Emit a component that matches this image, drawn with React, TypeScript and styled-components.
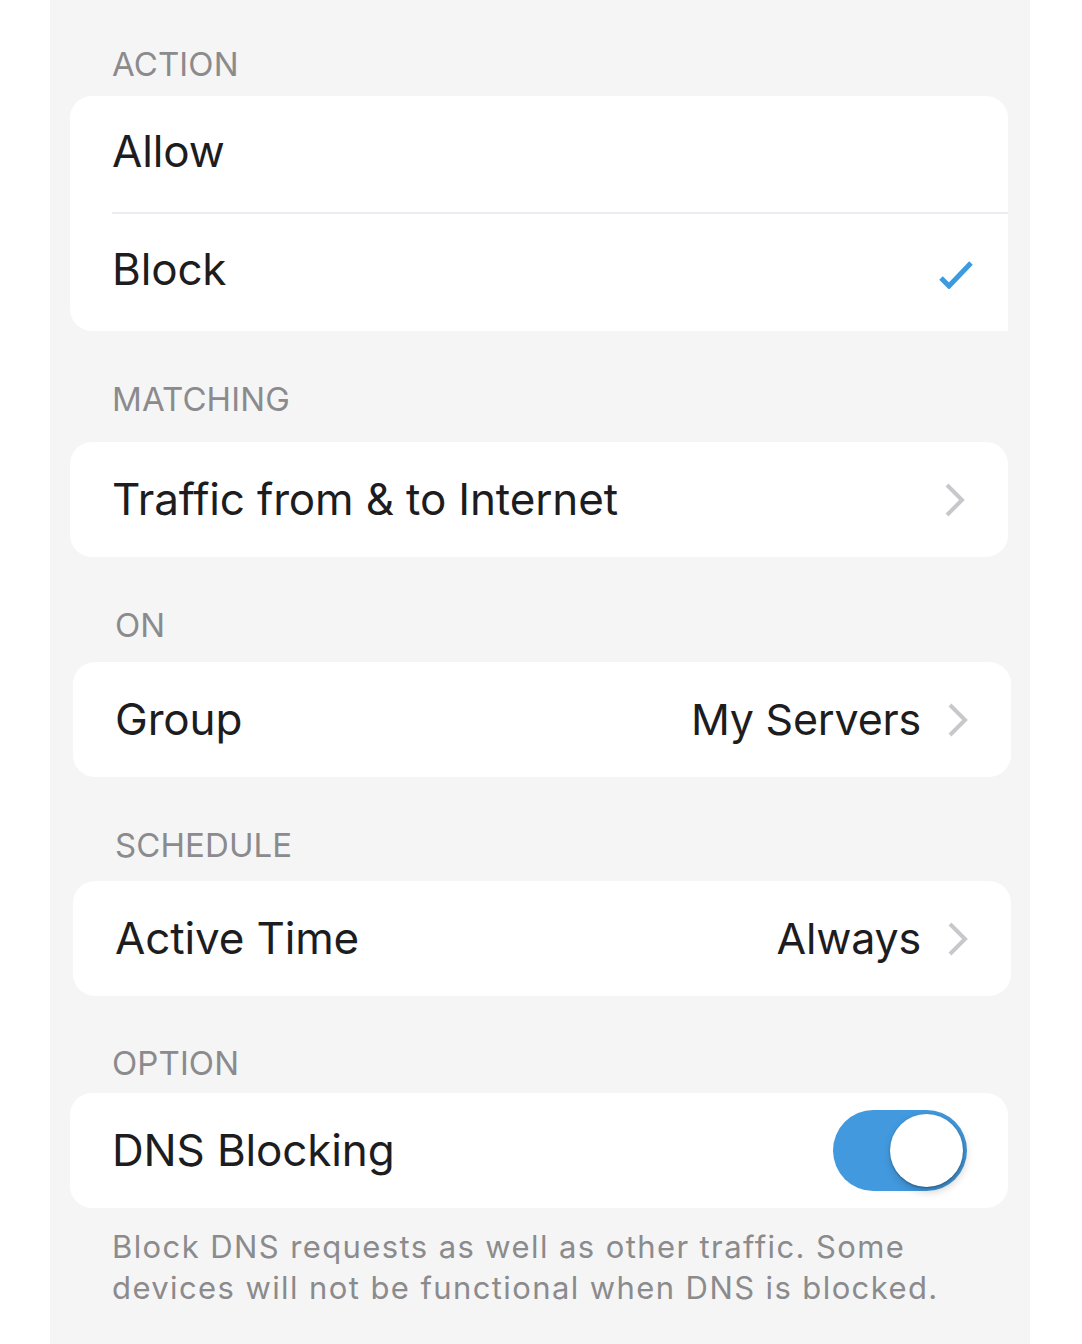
import React from "react";
import styled, { createGlobalStyle } from "styled-components";

const GlobalStyle = createGlobalStyle`
  html, body {
    margin: 0;
    padding: 0;
    background: #ffffff;
  }
  body {
    font-family: Inter, "Noto Sans", "Liberation Sans", sans-serif;
    -webkit-font-smoothing: antialiased;
  }
  * { box-sizing: border-box; }
`;

const Page = styled.main`
  margin-left: 50px;
  width: 980px;
  min-height: 1344px;
  background: #f5f5f5;
  padding: 0 22px 40px 20px;
  display: flex;
  flex-direction: column;
`;

const Section = styled.section<{ $shift?: number }>`
  display: flex;
  flex-direction: column;
  margin-left: ${(p) => p.$shift ?? 0}px;
  margin-right: ${(p) => -(p.$shift ?? 0)}px;
`;

const SectionTitle = styled.h2<{ $top: number; $bottom: number }>`
  margin: ${(p) => p.$top}px 0 ${(p) => p.$bottom}px 0;
  padding-left: 42px;
  font-size: 33px;
  line-height: 40px;
  font-weight: 400;
  color: #8b8b8e;
  letter-spacing: 0.1px;
  text-transform: uppercase;
`;

const Card = styled.div<{ $squareCorner?: boolean }>`
  background: #ffffff;
  border-radius: ${(p) => (p.$squareCorner ? "22px 22px 0 22px" : "22px")};
  display: flex;
  flex-direction: column;
  overflow: hidden;
`;

const Row = styled.div<{ $height?: number; $lift?: number }>`
  height: ${(p) => p.$height ?? 115}px;
  display: flex;
  align-items: center;
  padding: 0 36px ${(p) => p.$lift ?? 0}px 42px;
  gap: 27px;
`;

const Label = styled.span`
  flex: 1;
  font-size: 44px;
  line-height: 1.2;
  color: #1d1d1f;
  letter-spacing: -0.15px;
`;

const Value = styled.span`
  font-size: 43px;
  line-height: 1.2;
  color: #1d1d1f;
  letter-spacing: -0.2px;
`;

const Divider = styled.div`
  height: 2px;
  margin-left: 42px;
  background: #e9edf1;
`;

const ChevronIcon = styled.svg`
  width: 20px;
  height: 34px;
  margin-right: 7px;
  flex: none;
`;

const CheckIcon = styled.svg`
  width: 36px;
  height: 30px;
  margin-top: 8px;
  margin-right: -2px;
  flex: none;
`;

const Toggle = styled.div<{ $on: boolean }>`
  width: 134px;
  height: 81px;
  border-radius: 41px;
  background: ${(p) => (p.$on ? "#4299dd" : "#e5e5ea")};
  padding: 4px;
  display: flex;
  justify-content: ${(p) => (p.$on ? "flex-end" : "flex-start")};
  margin-right: 5px;
  flex: none;
`;

const Knob = styled.div`
  width: 73px;
  height: 73px;
  border-radius: 50%;
  background: #ffffff;
  box-shadow: 2px 4px 10px rgba(0, 0, 0, 0.22), 0 1px 2px rgba(0, 0, 0, 0.3);
`;

const Footnote = styled.p`
  margin: 18px 0 0 0;
  padding: 0 36px 0 42px;
  font-size: 31px;
  line-height: 41px;
  color: #8b8b8d;
  letter-spacing: 1.4px;
`;

const Chevron = () => (
  <ChevronIcon viewBox="0 0 20 34" aria-hidden>
    <polyline
      points="2,2 17,17 2,32"
      fill="none"
      stroke="#c7c7cc"
      strokeWidth={4}
      strokeLinejoin="miter"
    />
  </ChevronIcon>
);

const Check = () => (
  <CheckIcon viewBox="0 0 36 30" aria-hidden>
    <polyline
      points="3,19 11,27 33,4"
      fill="none"
      stroke="#3c9ae0"
      strokeWidth={5}
      strokeLinejoin="miter"
    />
  </CheckIcon>
);

export default function App() {
  return (
    <>
      <GlobalStyle />
      <Page>
        <Section>
          <SectionTitle $top={44} $bottom={12}>Action</SectionTitle>
          <Card $squareCorner>
            <Row $height={116} $lift={6}>
              <Label>Allow</Label>
            </Row>
            <Divider />
            <Row $height={117} $lift={6}>
              <Label>Block</Label>
              <Check />
            </Row>
          </Card>
        </Section>

        <Section>
          <SectionTitle $top={48} $bottom={23}>Matching</SectionTitle>
          <Card>
            <Row>
              <Label>Traffic from &amp; to Internet</Label>
              <Chevron />
            </Row>
          </Card>
        </Section>

        <Section $shift={3}>
          <SectionTitle $top={48} $bottom={17}>On</SectionTitle>
          <Card>
            <Row>
              <Label>Group</Label>
              <Value>My Servers</Value>
              <Chevron />
            </Row>
          </Card>
        </Section>

        <Section $shift={3}>
          <SectionTitle $top={48} $bottom={16}>Schedule</SectionTitle>
          <Card>
            <Row>
              <Label>Active Time</Label>
              <Value>Always</Value>
              <Chevron />
            </Row>
          </Card>
        </Section>

        <Section>
          <SectionTitle $top={47} $bottom={10}>Option</SectionTitle>
          <Card>
            <Row>
              <Label>DNS Blocking</Label>
              <Toggle $on>
                <Knob />
              </Toggle>
            </Row>
          </Card>
          <Footnote>
            Block DNS requests as well as other traffic. Some devices will not
            be functional when DNS is blocked.
          </Footnote>
        </Section>
      </Page>
    </>
  );
}
